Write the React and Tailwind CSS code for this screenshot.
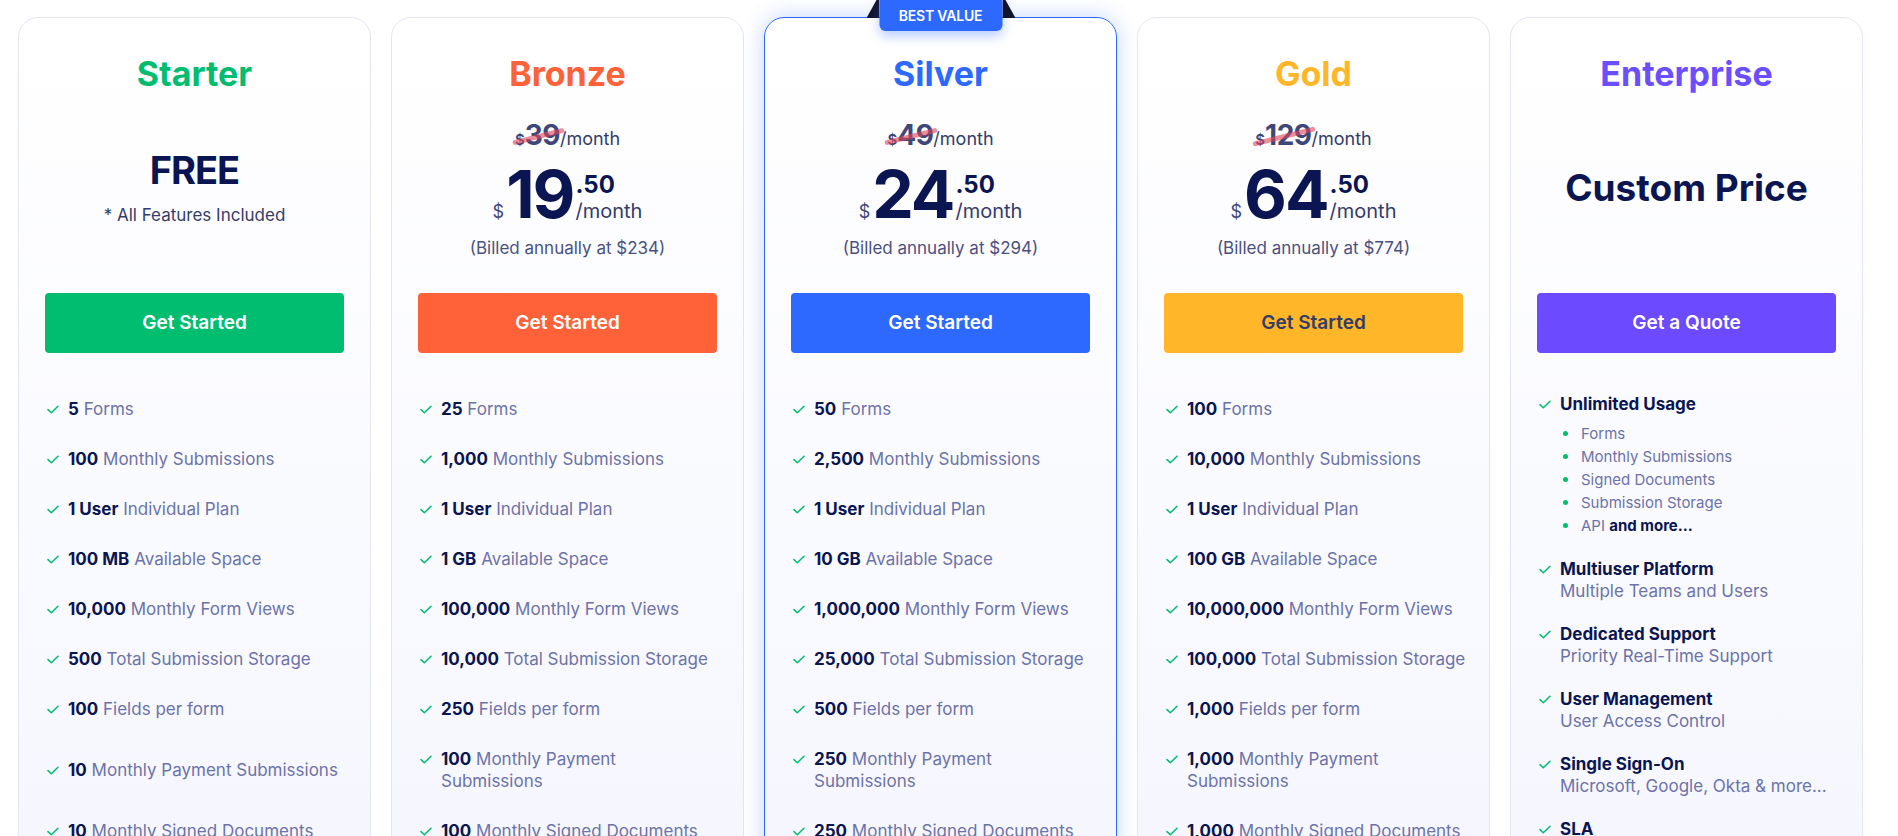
import React from 'react';

const plans = [
    {
        name: 'Starter',
        title: 'text-[#01BD6F]',
        button: 'bg-[#01BD6F] text-white',
        cta: 'Get Started',
        price: { kind: 'free' },
        features: [
            ['5', 'Forms'],
            ['100', 'Monthly Submissions'],
            ['1 User', 'Individual Plan'],
            ['100 MB', 'Available Space'],
            ['10,000', 'Monthly Form Views'],
            ['500', 'Total Submission Storage'],
            ['100', 'Fields per form'],
            ['10', 'Monthly Payment Submissions', true],
            ['10', 'Monthly Signed Documents'],
            ['100', 'API Calls per Day'],
        ],
    },
    {
        name: 'Bronze',
        title: 'text-[#FF6138]',
        button: 'bg-[#FF6138] text-white',
        cta: 'Get Started',
        price: { kind: 'paid', old: '39', whole: '19', billed: '234' },
        features: [
            ['25', 'Forms'],
            ['1,000', 'Monthly Submissions'],
            ['1 User', 'Individual Plan'],
            ['1 GB', 'Available Space'],
            ['100,000', 'Monthly Form Views'],
            ['10,000', 'Total Submission Storage'],
            ['250', 'Fields per form'],
            ['100', ['Monthly Payment', 'Submissions'], true],
            ['100', 'Monthly Signed Documents'],
            ['1,000', 'API Calls per Day'],
        ],
    },
    {
        name: 'Silver',
        title: 'text-[#2E69FF]',
        button: 'bg-[#2E69FF] text-white',
        cta: 'Get Started',
        featured: true,
        price: { kind: 'paid', old: '49', whole: '24', billed: '294' },
        features: [
            ['50', 'Forms'],
            ['2,500', 'Monthly Submissions'],
            ['1 User', 'Individual Plan'],
            ['10 GB', 'Available Space'],
            ['1,000,000', 'Monthly Form Views'],
            ['25,000', 'Total Submission Storage'],
            ['500', 'Fields per form'],
            ['250', ['Monthly Payment', 'Submissions'], true],
            ['250', 'Monthly Signed Documents'],
            ['10,000', 'API Calls per Day'],
        ],
    },
    {
        name: 'Gold',
        title: 'text-[#FFB629]',
        button: 'bg-[#FFB629] text-[#343C6A]',
        cta: 'Get Started',
        price: { kind: 'paid', old: '129', whole: '64', billed: '774' },
        features: [
            ['100', 'Forms'],
            ['10,000', 'Monthly Submissions'],
            ['1 User', 'Individual Plan'],
            ['100 GB', 'Available Space'],
            ['10,000,000', 'Monthly Form Views'],
            ['100,000', 'Total Submission Storage'],
            ['1,000', 'Fields per form'],
            ['1,000', ['Monthly Payment', 'Submissions'], true],
            ['1,000', 'Monthly Signed Documents'],
            ['100,000', 'API Calls per Day'],
        ],
    },
];

const enterprise = [
    ['Multiuser Platform', 'Multiple Teams and Users'],
    ['Dedicated Support', 'Priority Real-Time Support'],
    ['User Management', 'User Access Control'],
    ['Single Sign-On', 'Microsoft, Google, Okta & more...'],
    ['SLA', 'Uptime Guarantee'],
];

function Check() {
    return (
        <span className="flex h-[22px] w-[12px] shrink-0 items-center">
            <svg width="12" height="9" viewBox="0 0 12 9" fill="none">
                <path d="M1 4.6 4.3 7.8 11 1.2" stroke="#01BD6F" strokeWidth="1.5" strokeLinecap="round" strokeLinejoin="round" />
            </svg>
        </span>
    );
}

function OldPrice({ value }) {
    return (
        <div className="mt-[26px] flex items-baseline leading-[30px] text-[#3F4778]">
            <span className="relative flex items-baseline">
                <span className="text-[15px] font-semibold">$</span>
                <span className="text-[28px] font-bold tracking-[-0.5px]">{value}</span>
                <span className="absolute left-[-3px] right-[-5px] top-[14px] h-[5px] -rotate-[14deg] rounded-full bg-[#E0455A]/60" />
            </span>
            <span className="text-[18px] text-[#343C6A]">/month</span>
        </div>
    );
}

function Price({ price }) {
    if (price.kind === 'free') {
        return (
            <div className="flex h-[198px] flex-col items-center">
                <div className="mt-[51px] text-[38px] font-bold leading-[50px] tracking-[-1px] text-[#0A1551]">FREE</div>
                <div className="mt-[9px] text-[17px] leading-[22px] text-[#343C6A]">* All Features Included</div>
            </div>
        );
    }
    if (price.kind === 'custom') {
        return (
            <div className="flex h-[198px] flex-col items-center">
                <div className="mt-[72px] text-[37px] font-bold leading-[44px] text-[#0A1551]">Custom Price</div>
            </div>
        );
    }
    return (
        <div className="flex h-[198px] flex-col items-center">
            <OldPrice value={price.old} />
            <div className="mt-[13px] flex items-end leading-none">
                <span className="mr-[2px] text-[18px] text-[#3F4778]">$</span>
                <span className="text-[66px] font-bold leading-[0.8] tracking-[-2px] text-[#0A1551]">{price.whole}</span>
                <span className="ml-[2px] flex flex-col gap-[4px]">
                    <span className="text-[24px] font-bold text-[#0A1551]">.50</span>
                    <span className="text-[20px] text-[#343C6A]">/month</span>
                </span>
            </div>
            <div className="mt-[16px] text-[17px] leading-[22px] text-[#4A5180]">(Billed annually at ${price.billed})</div>
        </div>
    );
}

function Feature({ strong, text, tall }) {
    const lines = Array.isArray(text) ? text : [text];
    return (
        <li className={tall ? 'flex min-h-[44px] items-center' : 'flex'}>
            <div className="flex gap-[9px]">
                <Check />
                <span className="whitespace-nowrap text-[17px] leading-[22px] text-[#6C73A8]">
                    <b className="font-bold text-[#0A1551]">{strong}</b> {lines[0]}
                    {lines[1] && (
                        <>
                            <br />
                            {lines[1]}
                        </>
                    )}
                </span>
            </div>
        </li>
    );
}

function Card({ featured, children }) {
    return (
        <div
            className={
                'relative rounded-[20px] border bg-gradient-to-b from-white to-[#F5F6FE] px-[26px] pb-[40px] pt-[36px] ' +
                (featured
                    ? 'border-[#2E69FF] shadow-[0_0_22px_rgba(46,105,255,0.28)]'
                    : 'border-[#E3E5F5]')
            }
        >
            {featured && (
                <div className="absolute -top-[18px] left-1/2 flex -translate-x-1/2">
                    <svg width="13" height="18" viewBox="0 0 13 18">
                        <path d="M0 18 10 0h3v18z" fill="#12142B" />
                    </svg>
                    <div className="flex h-[31px] w-[123px] items-center justify-center rounded-b-[6px] bg-[#2E69FF] text-[14px] font-semibold tracking-[-0.2px] text-white shadow-[0_5px_12px_rgba(46,105,255,0.35)]">
                        BEST VALUE
                    </div>
                    <svg width="13" height="18" viewBox="0 0 13 18">
                        <path d="M13 18 3 0H0v18z" fill="#12142B" />
                    </svg>
                </div>
            )}
            {children}
        </div>
    );
}

function Header({ name, title, price, button, cta }) {
    return (
        <>
            <h2 className={'text-center text-[34px] font-bold leading-[40px] ' + title}>{name}</h2>
            <Price price={price} />
            <button className={'mt-[1px] flex h-[60px] w-full items-center justify-center rounded-[4px] text-[19px] font-semibold ' + button}>
                {cta}
            </button>
        </>
    );
}

export default function App() {
    return (
        <div className="h-screen overflow-y-scroll bg-white font-['Inter',sans-serif] antialiased">
            <div className="grid grid-cols-[repeat(5,353px)] gap-[20px] pl-[18px] pt-[17px]">
                {plans.map((plan) => (
                    <Card key={plan.name} featured={plan.featured}>
                        <Header {...plan} />
                        <ul className="mt-[45px] flex flex-col gap-[28px] pl-[2px]">
                            {plan.features.map(([strong, text, tall]) => (
                                <Feature key={strong + text} strong={strong} text={text} tall={tall} />
                            ))}
                        </ul>
                    </Card>
                ))}
                <Card>
                    <Header
                        name="Enterprise"
                        title="text-[#6B4EFF]"
                        button="bg-[#6B4AFF] text-white"
                        cta="Get a Quote"
                        price={{ kind: 'custom' }}
                    />
                    <ul className="mt-[40px] flex flex-col gap-[21px] pl-[2px]">
                        <li className="flex gap-[9px]">
                            <Check />
                            <div>
                                <div className="text-[17px] font-bold leading-[22px] text-[#0A1551]">Unlimited Usage</div>
                                <ul className="mt-[7px] text-[15px] leading-[23px] text-[#6C73A8]">
                                    {['Forms', 'Monthly Submissions', 'Signed Documents', 'Submission Storage'].map((t) => (
                                        <li key={t} className="flex items-center gap-[13px] pl-[3px]">
                                            <span className="h-[5px] w-[5px] rounded-full bg-[#01BD6F]" />
                                            {t}
                                        </li>
                                    ))}
                                    <li className="flex items-center gap-[13px] pl-[3px]">
                                        <span className="h-[5px] w-[5px] rounded-full bg-[#01BD6F]" />
                                        <span>
                                            API <b className="font-bold text-[#0A1551]">and more...</b>
                                        </span>
                                    </li>
                                </ul>
                            </div>
                        </li>
                        {enterprise.map(([head, sub]) => (
                            <li key={head} className="flex gap-[9px]">
                                <Check />
                                <div className="text-[17px] leading-[22px]">
                                    <div className="font-bold text-[#0A1551]">{head}</div>
                                    <div className="text-[#6C73A8]">{sub}</div>
                                </div>
                            </li>
                        ))}
                    </ul>
                </Card>
            </div>
        </div>
    );
}
